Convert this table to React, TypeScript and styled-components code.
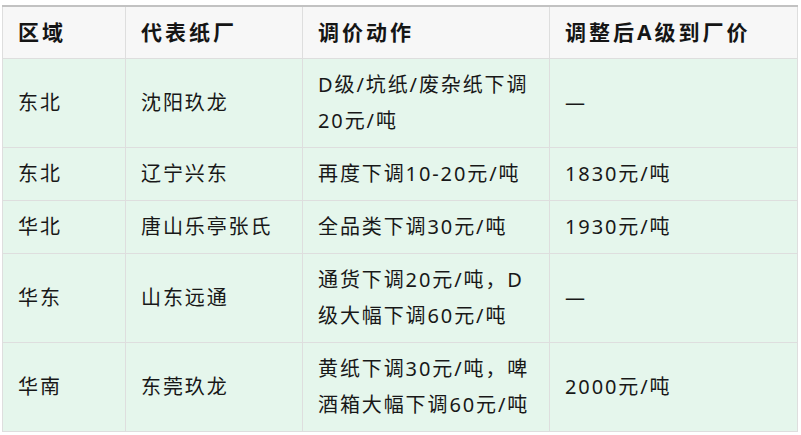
import React from 'react';
import styled, { createGlobalStyle } from 'styled-components';

const GlobalStyle = createGlobalStyle`
  html, body {
    margin: 0;
    padding: 0;
    background: #ffffff;
  }
  body {
    font-family: "Noto Sans", "Noto Sans CJK SC", sans-serif;
    color: #181818;
  }
`;

const Page = styled.div`
  padding: 5px 4px 0 2px;
`;

const Table = styled.table`
  width: 795px;
  border-collapse: collapse;
  table-layout: fixed;
  border-top: 2px solid #c2c2c2;
`;

const HeadCell = styled.th<{ $w: number }>`
  width: ${p => p.$w}px;
  box-sizing: border-box;
  background: #f7f7f7;
  border: 1px solid #dedede;
  border-top: none;
  padding: 7px 15px 8px;
  text-align: left;
  font-size: 21px;
  font-weight: 700;
  line-height: 36px;
  letter-spacing: 3px;
  color: #151515;
`;

const Row = styled.tr`
  background: #e5f6ec;
`;

const Cell = styled.td`
  border: 1px solid #dedede;
  padding: 8px 15px;
  font-size: 20px;
  line-height: 36px;
  letter-spacing: 1.9px;
  vertical-align: middle;
  word-break: break-all;
`;

const columns = [
  { title: '区域', w: 123 },
  { title: '代表纸厂', w: 177 },
  { title: '调价动作', w: 247 },
  { title: '调整后A级到厂价', w: 248 },
];

const rows = [
  ['东北', '沈阳玖龙', 'D级/坑纸/废杂纸下调20元/吨', '—'],
  ['东北', '辽宁兴东', '再度下调10-20元/吨', '1830元/吨'],
  ['华北', '唐山乐亭张氏', '全品类下调30元/吨', '1930元/吨'],
  ['华东', '山东远通', '通货下调20元/吨，D级大幅下调60元/吨', '—'],
  ['华南', '东莞玖龙', '黄纸下调30元/吨，啤酒箱大幅下调60元/吨', '2000元/吨'],
];

export default function App() {
  return (
    <Page>
      <GlobalStyle />
      <Table>
        <thead>
          <tr>
            {columns.map(c => (
              <HeadCell key={c.title} $w={c.w}>{c.title}</HeadCell>
            ))}
          </tr>
        </thead>
        <tbody>
          {rows.map((r, i) => (
            <Row key={i}>
              {r.map((v, j) => (
                <Cell key={j}>{v}</Cell>
              ))}
            </Row>
          ))}
        </tbody>
      </Table>
    </Page>
  );
}
